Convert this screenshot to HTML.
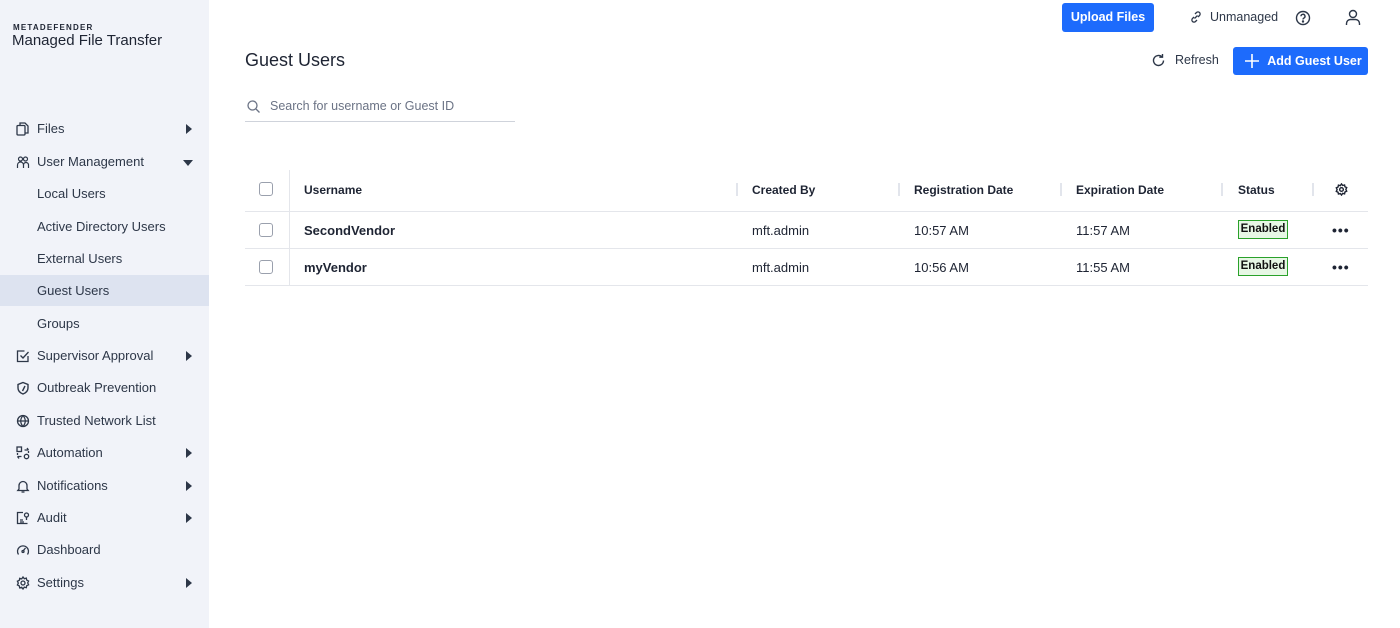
<!DOCTYPE html>
<html><head><meta charset="utf-8"><style>
*{margin:0;padding:0;box-sizing:border-box}
body{width:1400px;height:628px;overflow:hidden;font-family:"Liberation Sans",Arial,sans-serif;background:#fff;color:#1e2433;position:relative}
.sb{position:absolute;left:0;top:0;width:209px;height:628px;background:#f1f3f9}
.logo1{position:absolute;left:13px;top:23px;font-size:8px;font-weight:bold;letter-spacing:1.2px;color:#1e2433}
.logo2{position:absolute;left:12px;top:32px;font-size:15px;color:#1e2433}
.it{position:absolute;left:0;width:209px;height:32px;font-size:13px;color:#2d3748;line-height:34px}
.it .t{position:absolute;left:37px}
.it svg{position:absolute;left:16px;top:10px}
.it .ar{position:absolute;left:186px;top:12px;width:0;height:0;border-top:5px solid transparent;border-bottom:5px solid transparent;border-left:6px solid #2d3748}
.it .dn{position:absolute;left:183px;top:15px;width:0;height:0;border-left:5px solid transparent;border-right:5px solid transparent;border-top:6px solid #2d3748}
.act{background:#dde3f0}
.btn{position:absolute;background:#1d6bfc;color:#fff;font-weight:bold;font-size:12.5px;border-radius:3px;text-align:center}
.th{position:absolute;top:183px;font-size:12px;font-weight:bold;color:#1e2433}
.sep{position:absolute;top:183px;width:2px;height:13px;background:#e2e5ec}
.hl{position:absolute;left:245px;width:1123px;height:1px;background:#e4e6eb}
.cb{position:absolute;left:259px;width:14px;height:14px;border:1px solid #9aa0ad;border-radius:3px;background:#fff}
.td{position:absolute;font-size:13px;color:#1e2433}
.badge{position:absolute;left:1238px;width:50px;height:19px;border:1px solid #2aa12a;background:#e7f7e5;font-size:11.5px;font-weight:bold;text-align:center;line-height:17px;color:#111}
.dots{position:absolute;left:1332px;font-size:14px;font-weight:bold;letter-spacing:1px}
</style></head><body>
<div class="sb">
<div class="logo1">METADEFENDER</div>
<div class="logo2">Managed File Transfer</div>
<div class="it" style="top:112px"><svg width="14" height="14" viewBox="0 0 14 14" fill="none" stroke="#2d3748" stroke-width="1.3"><rect x="1" y="3.5" width="8" height="9.5" rx="1"/><path d="M4 3.5V1h5l3 3v7H9"/></svg><span class="t">Files</span><span class="ar"></span></div>
<div class="it" style="top:145px"><svg width="14" height="14" viewBox="0 0 14 14" fill="none" stroke="#2d3748" stroke-width="1.2"><circle cx="4.5" cy="4" r="2"/><circle cx="9.5" cy="4" r="2"/><path d="M1.5 13v-3a3 3 0 016 0v3M7.5 10a2 2 0 015 0v3"/></svg><span class="t">User Management</span><span class="dn"></span></div>
<div class="it" style="top:177px"><span class="t">Local Users</span></div>
<div class="it" style="top:210px"><span class="t">Active Directory Users</span></div>
<div class="it" style="top:242px"><span class="t">External Users</span></div>
<div class="it act" style="top:275px;height:31px;line-height:32px"><span class="t">Guest Users</span></div>
<div class="it" style="top:307px"><span class="t">Groups</span></div>
<div class="it" style="top:339px"><svg width="14" height="14" viewBox="0 0 14 14" fill="none" stroke="#2d3748" stroke-width="1.3"><path d="M12 7v5.5H1.5V2h7"/><path d="M4.5 6.5l2.5 2.5 5.5-6"/></svg><span class="t">Supervisor Approval</span><span class="ar"></span></div>
<div class="it" style="top:371px"><svg width="14" height="14" viewBox="0 0 14 14" fill="none" stroke="#2d3748" stroke-width="1.4"><path d="M7 1.5l5 2v3.5c0 3-2.5 5-5 6-2.5-1-5-3-5-6V3.5z"/><path d="M9 5l-2.5 5"/></svg><span class="t">Outbreak Prevention</span></div>
<div class="it" style="top:404px"><svg width="14" height="14" viewBox="0 0 14 14" fill="none" stroke="#2d3748" stroke-width="1.3"><circle cx="7" cy="7" r="5.5"/><path d="M1.5 7h11M7 1.5c-3 3.5-3 7.5 0 11M7 1.5c3 3.5 3 7.5 0 11"/></svg><span class="t">Trusted Network List</span></div>
<div class="it" style="top:436px"><svg width="14" height="14" viewBox="0 0 14 14" fill="none" stroke="#2d3748" stroke-width="1.3"><rect x="1" y="1" width="4.5" height="4.5"/><circle cx="10.5" cy="10.5" r="2.2"/><path d="M8.5 4h4M11 2l1.5 2M1.5 10.5h4M3 12.5L1.5 10.5M1.5 9V7M12.5 5V7"/></svg><span class="t">Automation</span><span class="ar"></span></div>
<div class="it" style="top:469px"><svg width="14" height="14" viewBox="0 0 14 14" fill="none" stroke="#2d3748" stroke-width="1.3"><path d="M3 10V6.5a4 4 0 018 0V10l1.2 1.5H1.8z"/><path d="M5.5 13h3"/></svg><span class="t">Notifications</span><span class="ar"></span></div>
<div class="it" style="top:501px"><svg width="14" height="14" viewBox="0 0 14 14" fill="none" stroke="#2d3748" stroke-width="1.3"><path d="M7 1.5H1.5v11h10"/><path d="M4 9h3M4 11h4"/><circle cx="10.5" cy="4" r="2"/><path d="M10.5 6v3"/></svg><span class="t">Audit</span><span class="ar"></span></div>
<div class="it" style="top:533px"><svg width="14" height="14" viewBox="0 0 14 14" fill="none" stroke="#2d3748" stroke-width="1.3"><path d="M2.5 11.5a5.5 5.5 0 119 0"/><path d="M7 8l2.5-3"/><circle cx="7" cy="8.5" r="1"/></svg><span class="t">Dashboard</span></div>
<div class="it" style="top:566px"><svg width="14" height="14" viewBox="0 0 14 14" fill="none" stroke="#2d3748" stroke-width="1.3"><circle cx="7" cy="7" r="2"/><path d="M7 1l1.3 1.7 2-.6.4 2 1.9.9-.9 1.9.9 1.9-1.9.9-.4 2-2-.6L7 13l-1.3-1.7-2 .6-.4-2-1.9-.9.9-1.9-.9-1.9 1.9-.9.4-2 2 .6z"/></svg><span class="t">Settings</span><span class="ar"></span></div>
</div>

<div class="btn" style="left:1062px;top:3px;width:92px;height:29px;line-height:29px">Upload Files</div>
<svg style="position:absolute;left:1190px;top:11px" width="12" height="12" viewBox="0 0 12 12" fill="none" stroke="#2d3748" stroke-width="1.3"><path d="M5 3l1.5-1.5a2 2 0 013 3L8 6M7 9l-1.5 1.5a2 2 0 01-3-3L4 6M4.5 7.5l3-3"/></svg>
<div style="position:absolute;left:1210px;top:10px;font-size:12.5px;color:#2d3748">Unmanaged</div>
<svg style="position:absolute;left:1295px;top:10px" width="16" height="16" viewBox="0 0 16 16" fill="none" stroke="#2d3748" stroke-width="1.4"><circle cx="8" cy="8" r="6.5"/><path d="M6 6.3a2 2 0 113 1.7c-.8.4-1 .8-1 1.5"/><circle cx="8" cy="11.5" r=".5" fill="#2d3748"/></svg>
<svg style="position:absolute;left:1345px;top:9px" width="16" height="17" viewBox="0 0 16 17" fill="none" stroke="#2d3748" stroke-width="1.4"><circle cx="8" cy="5" r="3.5"/><path d="M1.5 16v-1.5a4 4 0 014-4h5a4 4 0 014 4V16"/></svg>

<div style="position:absolute;left:245px;top:50px;font-size:18px;color:#1e2433">Guest Users</div>
<svg style="position:absolute;left:1151px;top:53px" width="15" height="15" viewBox="0 0 15 15" fill="none" stroke="#2d3748" stroke-width="1.4"><path d="M12.5 7.5a5 5 0 11-1.5-3.6"/><path d="M11.5 1v3.2H8.3"/></svg>
<div style="position:absolute;left:1175px;top:53px;font-size:12.5px;color:#2d3748">Refresh</div>
<div class="btn" style="left:1233px;top:47px;width:135px;height:28px;line-height:28px;padding-left:28px">Add Guest User</div>
<svg style="position:absolute;left:1245px;top:54px" width="14" height="14" viewBox="0 0 14 14" stroke="#fff" stroke-width="1.6"><path d="M7 0v14M0 7h14"/></svg>

<svg style="position:absolute;left:247px;top:100px" width="13" height="13" viewBox="0 0 13 13" fill="none" stroke="#6b7385" stroke-width="1.3"><circle cx="5.5" cy="5.5" r="4.5"/><path d="M9 9l3.5 3.5"/></svg>
<div style="position:absolute;left:270px;top:99px;font-size:12.5px;color:#6b7385">Search for username or Guest ID</div>
<div style="position:absolute;left:245px;top:121px;width:270px;height:1px;background:#cfd3db"></div>

<div style="position:absolute;left:289px;top:170px;width:1px;height:115px;background:#e4e6eb"></div>
<div class="cb" style="top:182px"></div>
<div class="th" style="left:304px">Username</div>
<div class="sep" style="left:736px"></div><div class="th" style="left:752px">Created By</div>
<div class="sep" style="left:898px"></div><div class="th" style="left:914px">Registration Date</div>
<div class="sep" style="left:1060px"></div><div class="th" style="left:1076px">Expiration Date</div>
<div class="sep" style="left:1221px"></div><div class="th" style="left:1238px">Status</div>
<div class="sep" style="left:1312px"></div>
<svg style="position:absolute;left:1335px;top:183px" width="13" height="13" viewBox="0 0 14 14" fill="none" stroke="#1e2433" stroke-width="1.5"><circle cx="7" cy="7" r="2"/><path d="M7 1l1.3 1.7 2-.6.4 2 1.9.9-.9 1.9.9 1.9-1.9.9-.4 2-2-.6L7 13l-1.3-1.7-2 .6-.4-2-1.9-.9.9-1.9-.9-1.9 1.9-.9.4-2 2 .6z"/></svg>
<div class="hl" style="top:211px"></div>
<div class="cb" style="top:223px"></div>
<div class="td" style="left:304px;top:223px;font-weight:bold">SecondVendor</div>
<div class="td" style="left:752px;top:223px">mft.admin</div>
<div class="td" style="left:914px;top:223px">10:57 AM</div>
<div class="td" style="left:1076px;top:223px">11:57 AM</div>
<div class="badge" style="top:220px">Enabled</div>
<div class="dots" style="top:222px">•••</div>
<div class="hl" style="top:248px"></div>
<div class="cb" style="top:260px"></div>
<div class="td" style="left:304px;top:260px;font-weight:bold">myVendor</div>
<div class="td" style="left:752px;top:260px">mft.admin</div>
<div class="td" style="left:914px;top:260px">10:56 AM</div>
<div class="td" style="left:1076px;top:260px">11:55 AM</div>
<div class="badge" style="top:257px">Enabled</div>
<div class="dots" style="top:259px">•••</div>
<div class="hl" style="top:285px"></div>
</body></html>
